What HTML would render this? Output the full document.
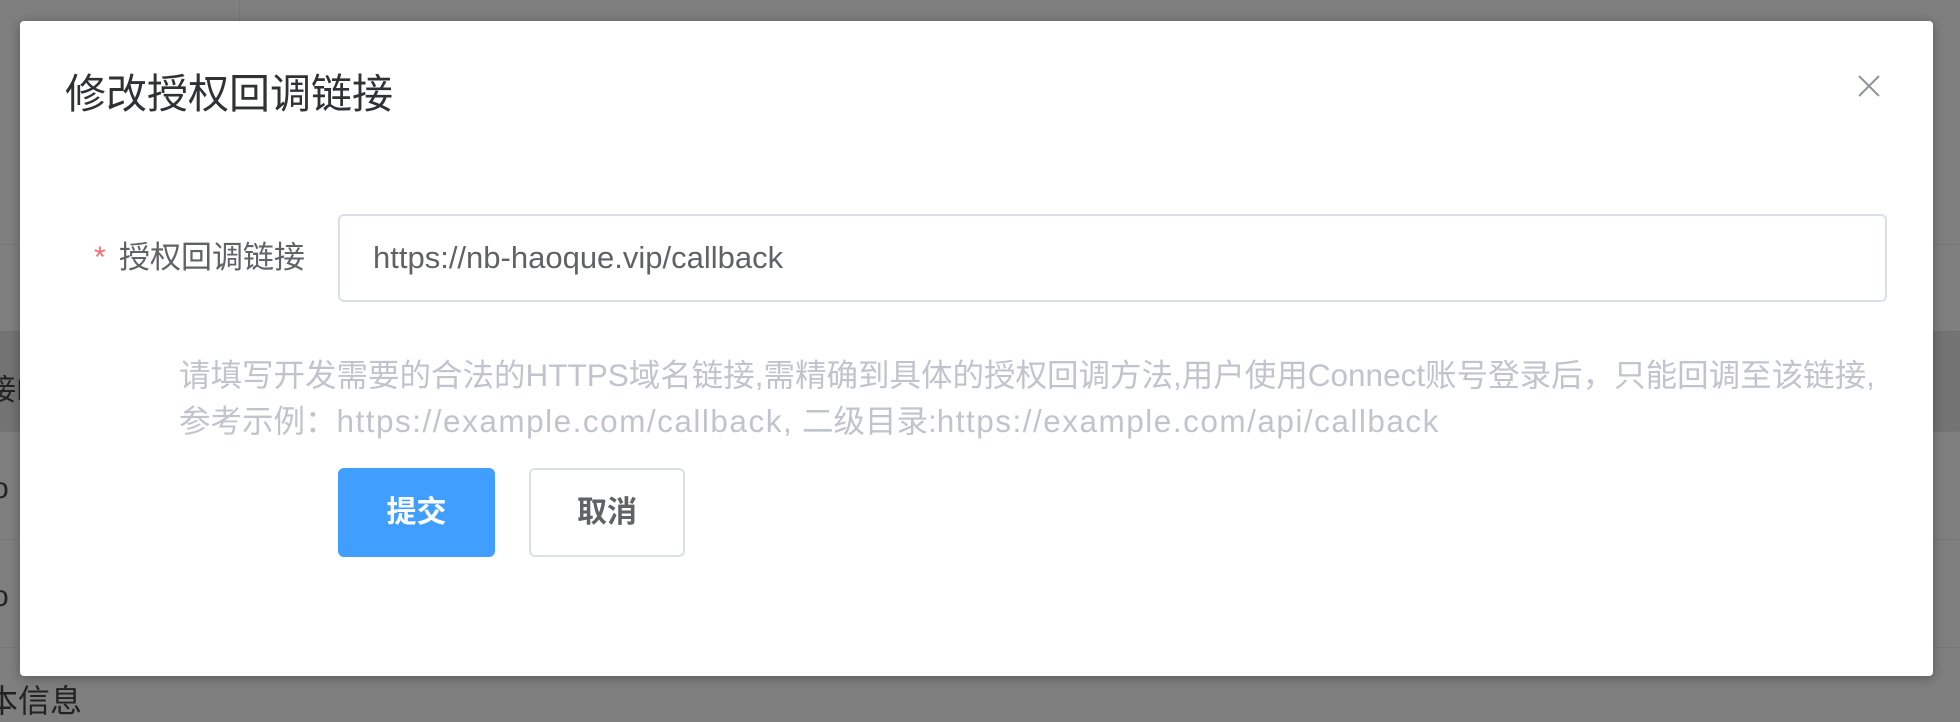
<!DOCTYPE html>
<html><head><meta charset="utf-8"><style>
*{margin:0;padding:0;box-sizing:border-box}
body{width:1960px;height:697px;overflow:hidden;background:#7f7f7f;position:relative;font-family:"Liberation Sans","Noto Sans CJK SC",sans-serif}
.a{position:absolute}
.dlg{left:20px;top:21px;width:1913px;height:655px;background:#fff;border-radius:4px;box-shadow:0 2px 12px rgba(0,0,0,.3)}
</style></head><body>
<div class="a" style="left:0;top:331px;width:1960px;height:100px;background:#737373"></div>
<div class="a" style="left:0;top:244px;width:1960px;height:1px;background:#777"></div>
<div class="a" style="left:0;top:431px;width:1960px;height:1px;background:#777"></div>
<div class="a" style="left:0;top:539px;width:1960px;height:1px;background:#777"></div>
<div class="a" style="left:0;top:647px;width:1960px;height:1px;background:#777"></div>
<div class="a" style="left:239px;top:0;width:1px;height:21px;background:#777"></div>
<div class="a" style="left:-14px;top:365px;font-size:30px;color:#222">接I</div>
<div class="a" style="left:-8px;top:472px;font-size:30px;color:#222">o</div>
<div class="a" style="left:-8px;top:580px;font-size:30px;color:#222">o</div>
<div class="a" style="left:-14px;top:676px;font-size:32px;color:#222">本信息</div>
<div class="a dlg"></div>
<div class="a" style="left:65px;top:70px;font-size:41px;line-height:48px;color:#303133">修改授权回调链接</div>
<svg class="a" style="left:1857px;top:74px" width="24" height="24" viewBox="0 0 24 24"><path d="M2 2L22 22M22 2L2 22" stroke="#909399" stroke-width="2"/></svg>
<div class="a" style="left:94px;top:238px;font-size:30px;line-height:40px;color:#f56c6c">*</div>
<div class="a" style="left:119px;top:238px;font-size:31px;line-height:40px;color:#606266">授权回调链接</div>
<div class="a" style="left:338px;top:214px;width:1549px;height:88px;border:2px solid #dcdfe6;border-radius:6px"></div>
<div class="a" style="left:373px;top:239px;font-size:31px;line-height:38px;color:#606266">https://nb-haoque.vip/callback</div>
<div class="a" style="left:179px;top:352px;font-size:31.5px;line-height:46px;color:#c0c4cc;white-space:nowrap">请填写开发需要的合法的HTTPS域名链接,需精确到具体的授权回调方法,用户使用Connect账号登录后，只能回调至该链接,<br>参考示例：<span style="letter-spacing:1.5px">https://example.com/callback,</span> 二级目录:<span style="letter-spacing:1.5px">https://example.com/api/callback</span></div>
<div class="a" style="left:338px;top:468px;width:157px;height:89px;background:#409eff;border-radius:6px;color:#fff;font-size:30px;font-weight:bold;line-height:89px;text-align:center">提交</div>
<div class="a" style="left:529px;top:468px;width:156px;height:89px;border:2px solid #dcdfe6;border-radius:6px;color:#606266;font-size:30px;font-weight:bold;line-height:85px;text-align:center">取消</div>
</body></html>
